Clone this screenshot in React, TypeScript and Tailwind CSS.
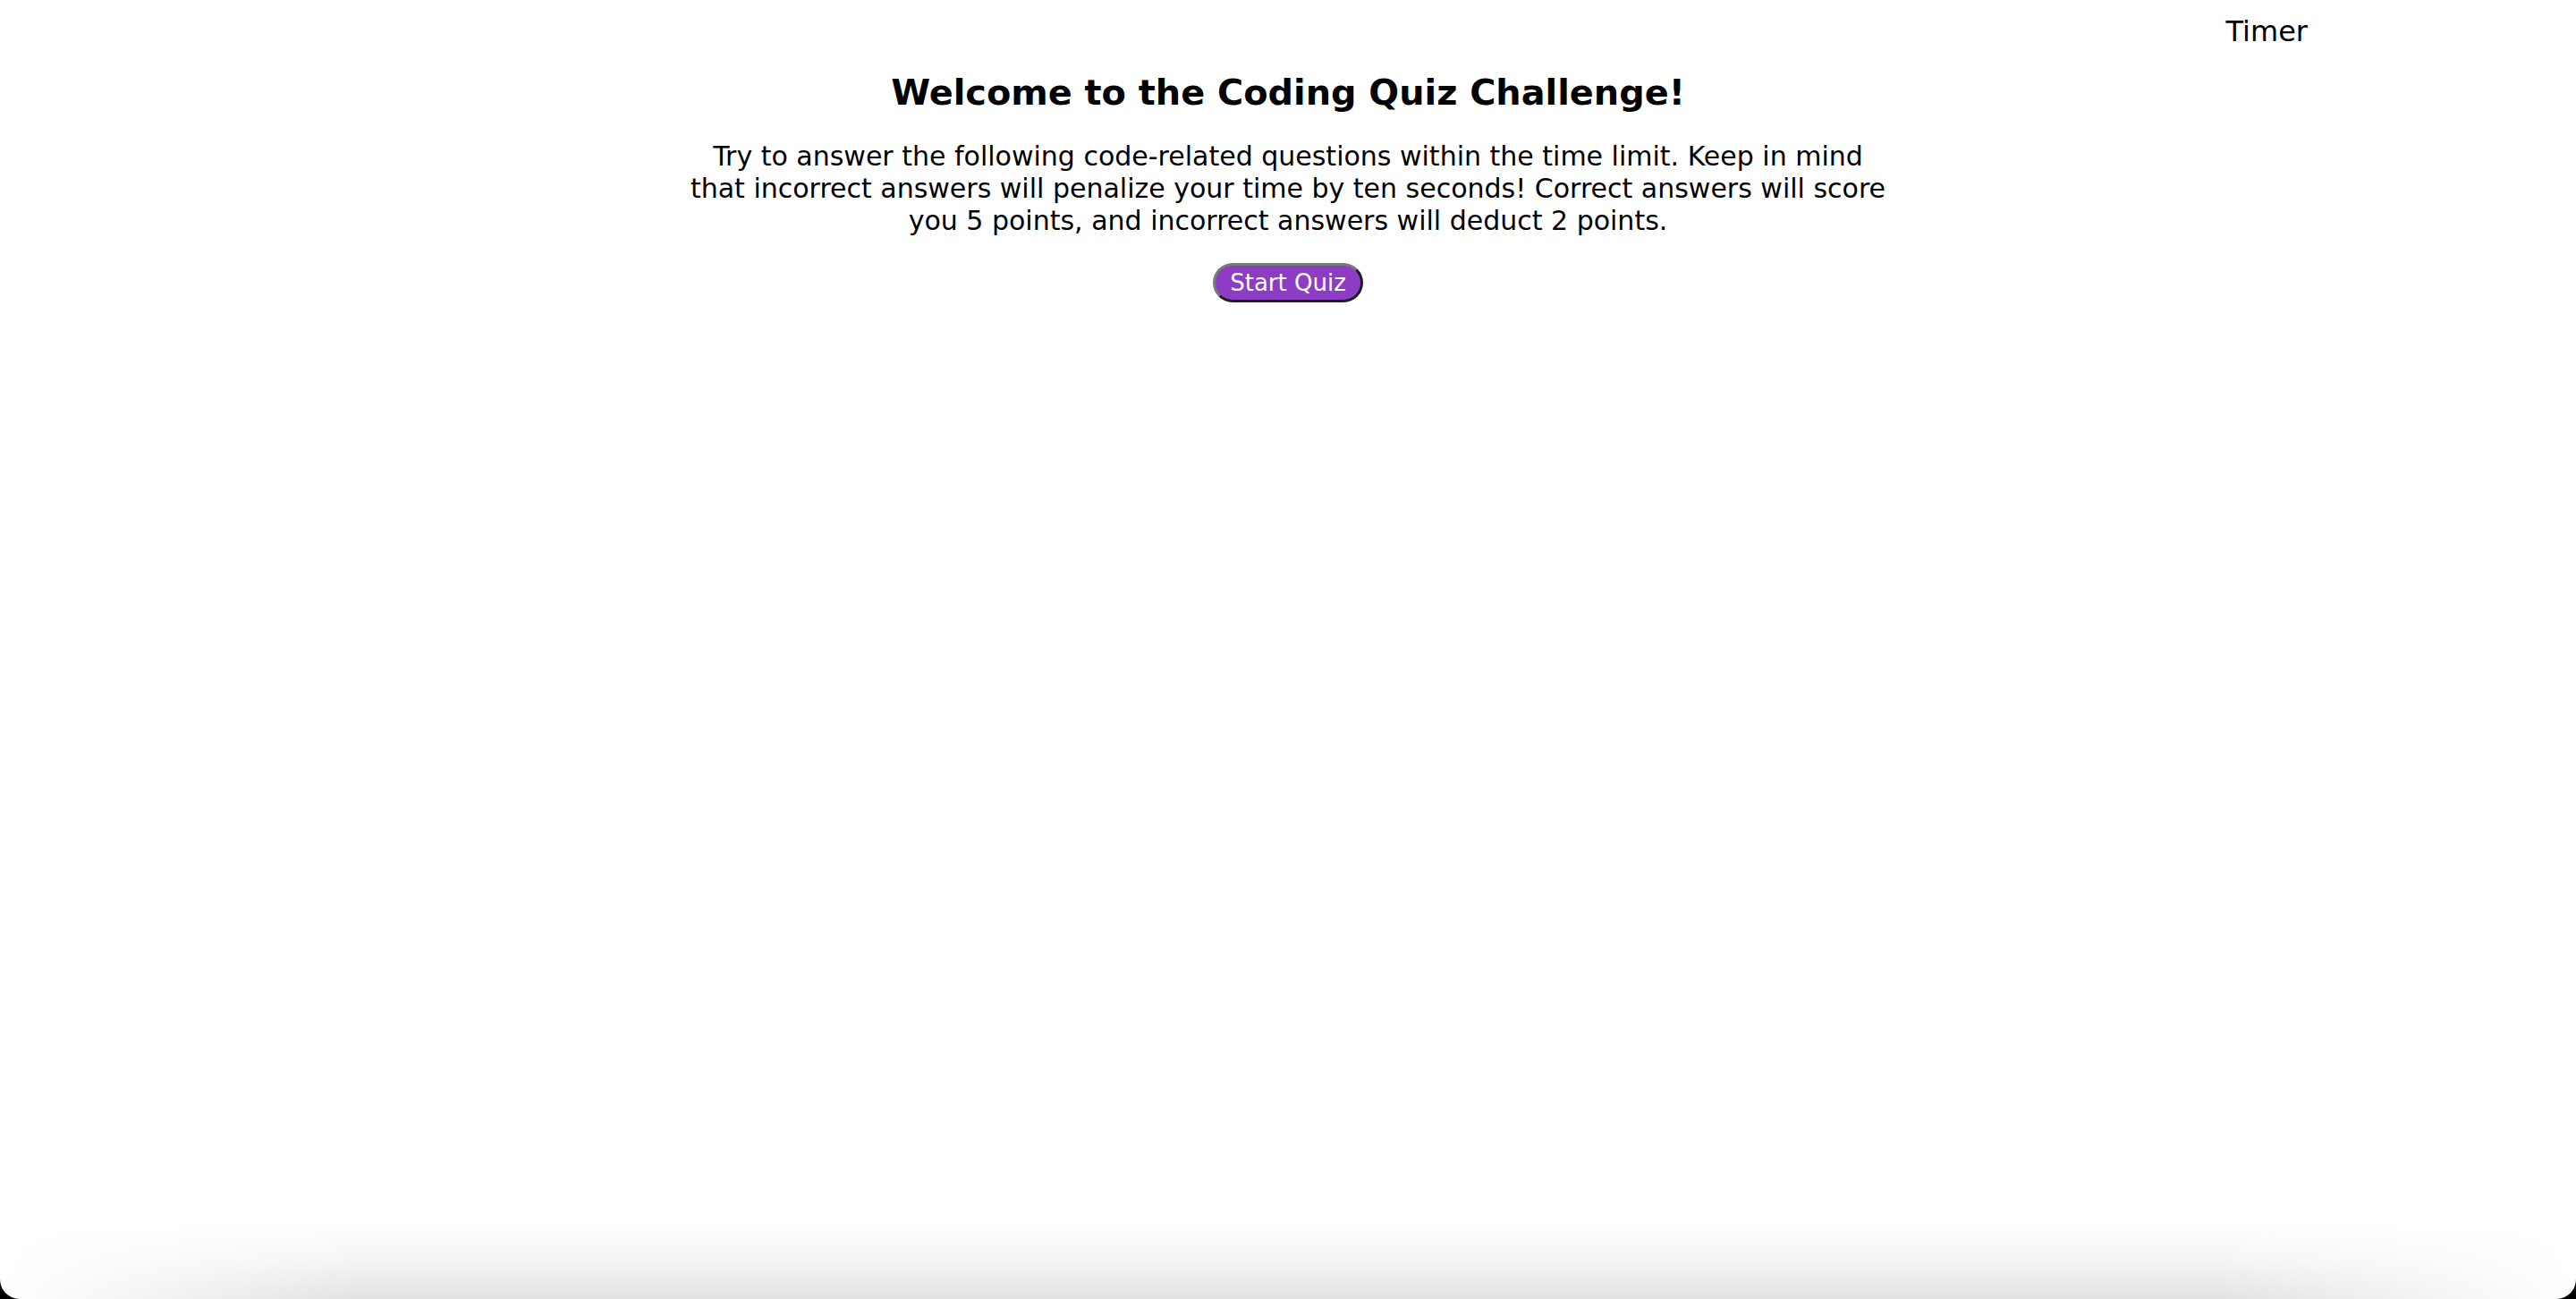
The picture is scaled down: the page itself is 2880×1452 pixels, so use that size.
import { useState } from "react";

export default function App () {

    const [started, setStarted] = useState<boolean>(false);

    return (
        <div className="bg-black h-[1452px] w-full">
            <div className="flex flex-col h-full bg-white rounded-b-[22px] overflow-hidden text-black font-['DejaVu_Sans',Verdana,sans-serif]">

                <header className="flex justify-end pt-4 pr-[300px]">
                    <p className="text-[32px] leading-[38px]">Timer</p>
                </header>

                <main className="flex flex-col items-center">
                    <h1 className="mt-[25px] text-[39.8px] leading-[48px] font-bold">Welcome to the Coding Quiz Challenge!</h1>
                    <p className="mt-[30px] w-[1352px] text-center text-[30px] leading-[36px]">
                        Try to answer the following code-related questions within the time limit. Keep in mind that incorrect answers will penalize your time by ten seconds! Correct answers will score you 5 points, and incorrect answers will deduct 2 points.
                    </p>
                    <button
                        onClick={() => setStarted(!started)}
                        className="mt-[29px] h-[44px] px-[16px] rounded-full bg-[#8c3dc4] text-white text-[26px] leading-[38px] border-[3px] border-t-[#7a7a7a] border-l-[#7a7a7a] border-r-[#1e1e1e] border-b-[#1e1e1e]"
                    >
                        Start Quiz
                    </button>
                </main>

                <div className="flex-1" />

                {/* bottom shading of the window */}
                <div className="h-[84px] bg-[linear-gradient(to_bottom,#ffffff,#f4f4f4_50%,#e2e2e2)] [mask-image:linear-gradient(to_right,transparent,black_14%,black_86%,transparent)]" />
            </div>
        </div>
    )
}
